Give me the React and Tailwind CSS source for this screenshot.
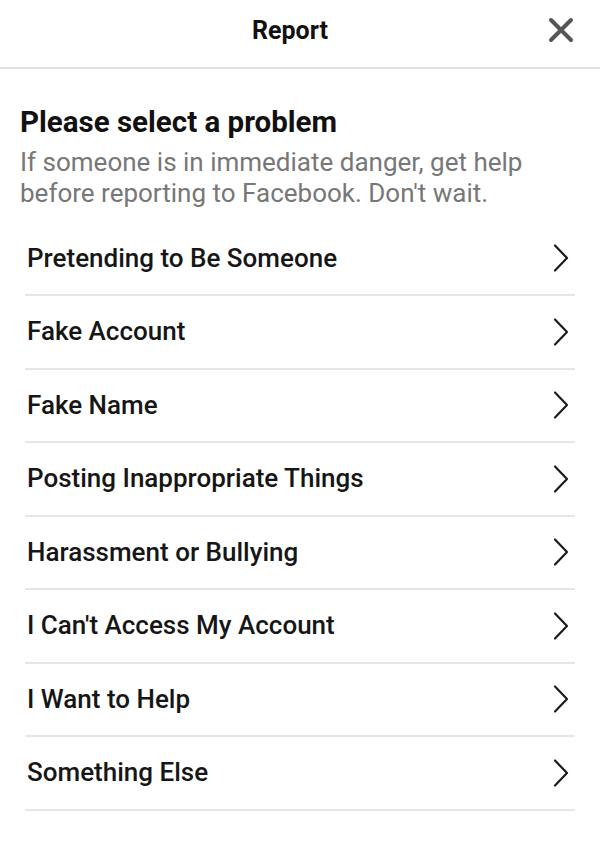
import React from "react";

const items = [
  "Pretending to Be Someone",
  "Fake Account",
  "Fake Name",
  "Posting Inappropriate Things",
  "Harassment or Bullying",
  "I Can't Access My Account",
  "I Want to Help",
  "Something Else",
];

function Chevron() {
  return (
    <svg width="18" height="30" viewBox="0 0 18 30" fill="none">
      <path d="M3 2.5 L15 15 L3 27.5" stroke="#1c1c1c" strokeWidth="2.2" strokeLinecap="round" strokeLinejoin="round" />
    </svg>
  );
}

function CloseX() {
  return (
    <svg width="26" height="26" viewBox="0 0 26 26" fill="none">
      <path d="M3 3 L23 23 M23 3 L3 23" stroke="#555555" strokeWidth="4" strokeLinecap="round" />
    </svg>
  );
}

export default function App() {
  return (
    <div className="w-[600px] h-[845px] bg-white overflow-hidden" style={{ fontFamily: "Roboto, 'Noto Sans', sans-serif" }}>
      <div className="h-[69px] flex items-center pb-[7px] border-b-2 border-[#e2e2e2]">
        <div className="pl-[252px] flex-1 text-[25px] font-bold text-[#111] leading-none">Report</div>
        <div className="pr-[26px] flex items-center">
          <CloseX />
        </div>
      </div>
      <div className="pt-[35px] px-[20px]">
        <h1 className="text-[29.5px] font-bold leading-[36px] text-[#111]">Please select a problem</h1>
        <p className="mt-[7px] text-[26px] leading-[31px] text-[#777] whitespace-nowrap">
          If someone is in immediate danger, get help
          <br />
          before reporting to Facebook. Don't wait.
        </p>
      </div>
      <ul className="mt-[13.5px] mx-[25px]">
        {items.map((t) => (
          <li key={t} className="h-[73.5px] flex items-center justify-between border-b-2 border-[#e6e6e6]">
            <span className="pl-[2px] text-[26px] font-medium text-[#161616] whitespace-nowrap">{t}</span>
            <span className="pr-[5px] flex items-center">
              <Chevron />
            </span>
          </li>
        ))}
      </ul>
    </div>
  );
}
